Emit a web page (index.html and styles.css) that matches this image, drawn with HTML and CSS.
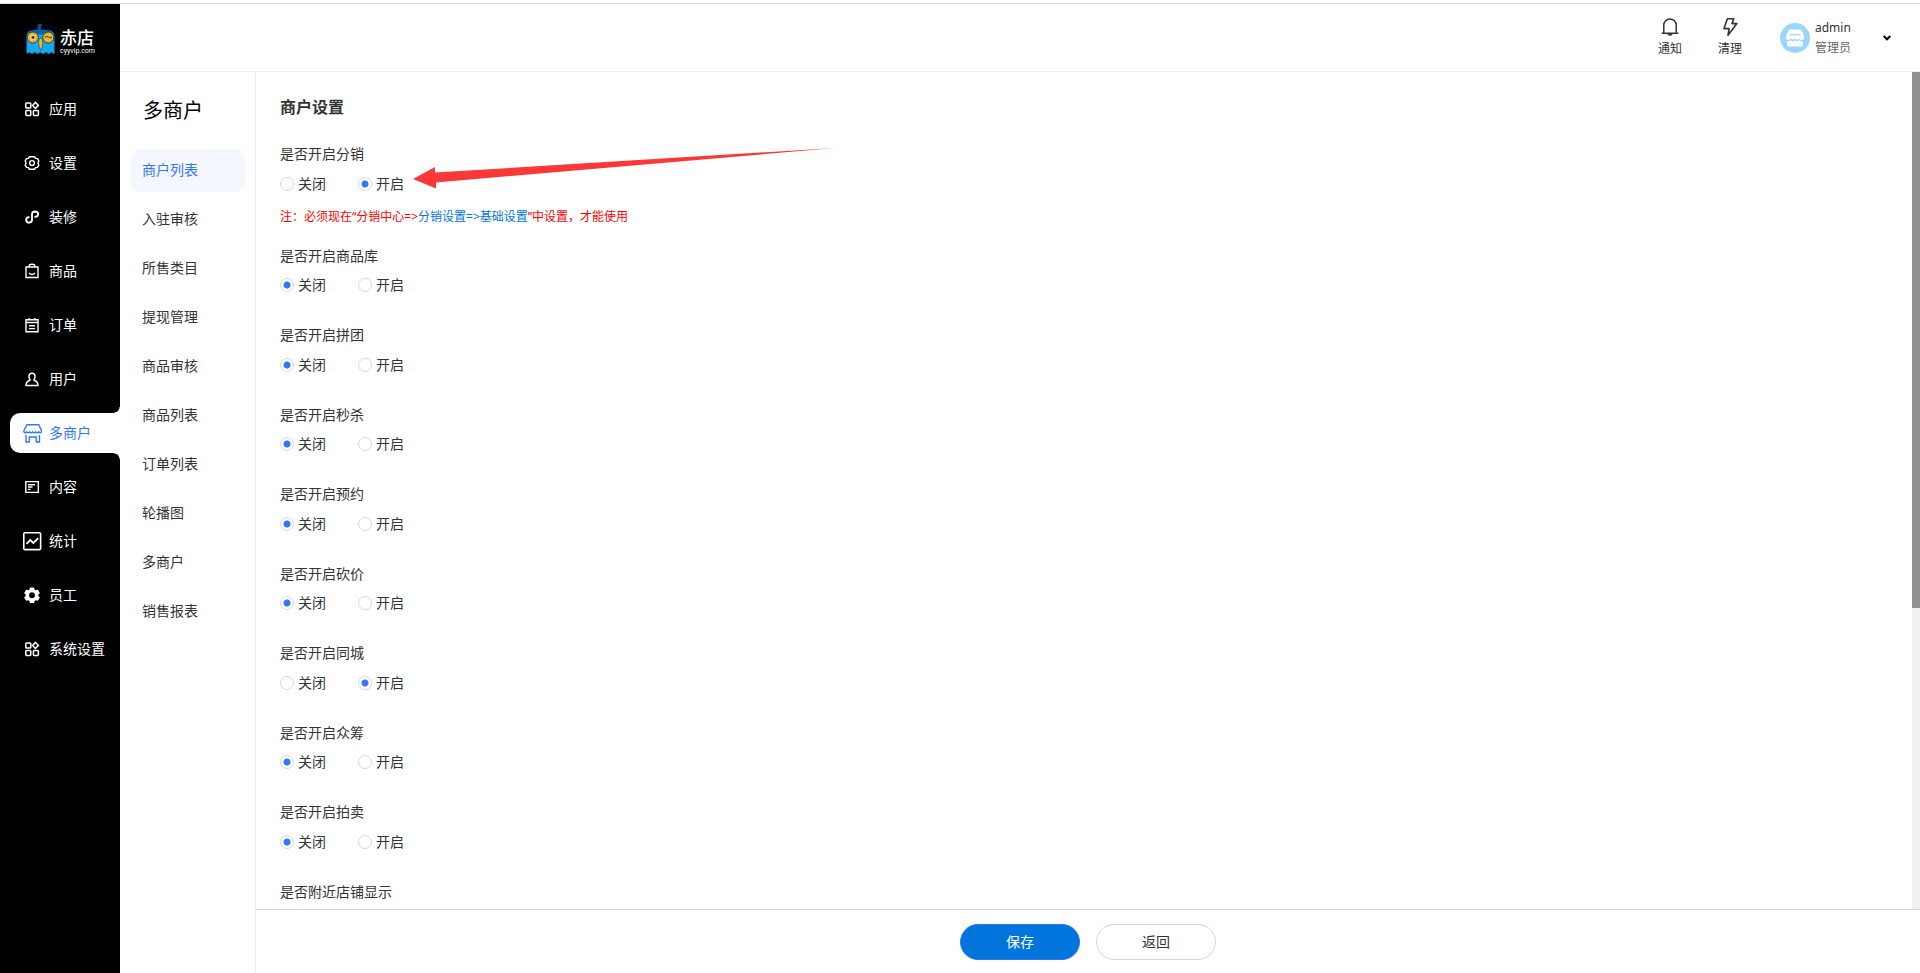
FILE: index.html
```html
<!DOCTYPE html>
<html lang="zh-CN">
<head>
<meta charset="utf-8">
<title>商户设置</title>
<link rel="stylesheet" href="styles.css">
</head>
<body>
<svg class="defs" aria-hidden="true">
  <symbol id="apps" viewBox="0 0 20 20">
    <g fill="none" stroke="currentColor" stroke-width="1.5">
      <rect x="3.8" y="4" width="5" height="5" rx=".8"/>
      <rect x="3.8" y="11.4" width="5" height="5" rx=".8"/>
      <rect x="11.4" y="11.4" width="5" height="5" rx=".8"/>
      <path d="M13.4 3.4 16.4 6.4 13.4 9.4 10.6 6.4Z"/>
    </g>
  </symbol>
</svg>
<div class="app">
  <aside class="sidebar">
    <a class="logo" href="#" aria-label="赤店">
      <svg class="logo-owl" viewBox="0 0 29 32" aria-hidden="true">
        <path d="M12.500 9C10.500 5 11 1 14 .6c2 0 2.500 1 2.300 2-.8-.3-1.500.2-1.300 1.200L16 9z" fill="#0a4a90"/>
        <path d="M.6 31V13Q1 8 6 7.600H23Q28 8 28.400 13V31l-2.800-1.500-2.800 1.500-2.800-1.500-2.800 1.500-2.800-1.500L11.600 31l-2.800-1.500L6 31l-2.700-1.500z" fill="#1ba8e8" stroke="#0a4a90" stroke-width=".8"/>
        <path d="M2 11Q7 5 14.500 7 22 5 27 11L22 9 14.500 12 7 9z" fill="#0d62ac"/>
        <circle cx="6.800" cy="14.500" r="5.500" fill="#fbb813" stroke="#0a4180" stroke-width="1"/>
        <circle cx="22.300" cy="14.500" r="5.500" fill="#fbb813" stroke="#0a4180" stroke-width="1"/>
        <circle cx="7" cy="14.300" r="2.400" fill="#fff3c8"/>
        <circle cx="7" cy="14.300" r="1.600" fill="#123e78"/>
        <path d="M18.800 14.500Q20.300 12.400 22.300 14T26 14" fill="none" stroke="#123e78" stroke-width="1"/>
        <path d="M14.600 14.500Q19 18.500 14.800 27.500 10.400 18.500 14.600 14.500z" fill="#fbb813" stroke="#0a4180" stroke-width=".6"/>
      </svg>
      <span class="logo-text"><b class="logo-name">赤店</b><span class="logo-site">cyyvip.com</span></span>
    </a>
    <nav class="menu">
      <a class="menu-item" href="#"><svg class="menu-icon"><use href="#apps"/></svg>应用</a>
      <a class="menu-item" href="#"><svg class="menu-icon" viewBox="0 0 20 20" fill="none" stroke="currentColor" stroke-width="1.400" stroke-linejoin="round"><path d="M7.500 3.700h5l1 1.700 2 .2 1.300 2.200-.8 2.200.8 2.200-1.300 2.200-2 .2-1 1.700h-5l-1-1.700-2-.2-1.300-2.200.8-2.200-.8-2.200 1.300-2.200 2-.2z"/><circle cx="10" cy="10" r="2.400"/></svg>设置</a>
      <a class="menu-item" href="#"><svg class="menu-icon" viewBox="0 0 20 20" fill="none" stroke="currentColor" stroke-width="1.900" stroke-linecap="round"><path d="M6.800 10.300C4.600 10.300 4 12 4.200 13.300c.3 1.600 1.600 2.400 3 2.300 1.900-.2 2.800-1.600 2.800-3.200V7.600C10 6 11.200 4.600 13 4.500c1.700 0 3 1 3.100 2.500.1 1.600-.9 2.800-2.900 2.700"/></svg>装修</a>
      <a class="menu-item" href="#"><svg class="menu-icon" viewBox="0 0 20 20" fill="none" stroke="currentColor" stroke-width="1.400"><path d="M4 6h12v10.500H4zM7.200 6V5Q7.200 3.300 10 3.300T12.800 5v1M7 12q3 3 6 0"/></svg>商品</a>
      <a class="menu-item" href="#"><svg class="menu-icon" viewBox="0 0 20 20" fill="none" stroke="currentColor" stroke-width="1.400"><path d="M4 4.700h12v12H4zM4 7.500h12M7.200 3v2.500M12.800 3v2.500M7 10.700h6M7 13.600h6"/></svg>订单</a>
      <a class="menu-item" href="#"><svg class="menu-icon" viewBox="0 0 20 20" fill="none" stroke="currentColor" stroke-width="1.500" stroke-linejoin="round"><path d="M8.200 11C6.400 9.200 6.200 4.200 10 4.200s3.600 5 1.800 6.800c2 .8 4.200 1.200 4.200 5.500H4c0-4.300 2.200-4.700 4.200-5.500z"/></svg>用户</a>
      <a class="menu-item active" href="#" aria-current="page"><svg class="menu-icon" viewBox="0 0 20 20" fill="none" stroke="currentColor" stroke-width="1.400"><path d="M5 1.700h11.800l2.700 6v1.100q-1.400 2-3 0-1.500 2-2.900 0-1.500 2-2.900 0-1.500 2-2.900 0-1.500 2-2.900 0-1.700 2-3 0V7.700zM4 12v7h3.300v-5h6.900v5h3.300v-7"/></svg>多商户</a>
      <a class="menu-item" href="#"><svg class="menu-icon" viewBox="0 0 20 20" fill="none" stroke="currentColor" stroke-width="1.400"><path d="M3.800 4.600h12.500v10.800H3.800zM6 7.700h7M6 10h4.500M6 12.400h2.500"/></svg>内容</a>
      <a class="menu-item" href="#"><svg class="menu-icon" viewBox="0 0 20 20" fill="none" stroke="currentColor" stroke-width="1.600"><rect x="1.800" y="1.800" width="16.800" height="16.800" rx="1"/><path d="M4.500 12.800 8.200 9l3.200 3 4.800-4.800" stroke-width="1.900"/></svg>统计</a>
      <a class="menu-item" href="#"><svg class="menu-icon" viewBox="0 0 20 20"><path fill="currentColor" fill-rule="evenodd" d="M8 2.500h4l.5 2 1.400.8 2-.6 2 3.400-1.500 1.500v1.300l1.500 1.500-2 3.400-2-.6-1.400.8-.5 2H8l-.5-2-1.400-.8-2 .6-2-3.400 1.500-1.500V9.600L2.100 8.100l2-3.400 2 .6 1.400-.8zM10 7.300a2.900 2.900 0 1 0 0 5.800 2.900 2.900 0 0 0 0-5.800z"/></svg>员工</a>
      <a class="menu-item" href="#"><svg class="menu-icon"><use href="#apps"/></svg>系统设置</a>
    </nav>
  </aside>
  <div class="main">
    <header class="header">
      <button class="tool" type="button">
        <svg class="tool-icon" viewBox="0 0 20 20" fill="none" stroke="currentColor" stroke-width="1.500" stroke-linejoin="round"><path d="M1.600 16.200h16.800M3.800 16V8.200C3.800 4.500 6.500 1.900 10 1.900s6.200 2.600 6.200 6.300V16M8 16.800q2 2.600 4 0"/></svg>
        通知
      </button>
      <button class="tool" type="button">
        <svg class="tool-icon" viewBox="0 0 20 20" fill="none" stroke="currentColor" stroke-width="1.600" stroke-linejoin="round"><path d="M7.400 1.800h6.400L12 6.600h4.900L8 18.300l1.100-6.700H4z"/></svg>
        清理
      </button>
      <button class="account" type="button">
        <svg class="avatar" viewBox="0 0 30 30" aria-hidden="true"><circle cx="15" cy="15" r="15" fill="#99d6ff"/><path d="M9 6.500h12l3.200 6.500v1.500q0 2.500-2.500 2.500T19 15.500q-2 2.300-4 0-2 2.300-4 0Q10 17 8 17t-2.200-2.500V13z" fill="#fff"/><path d="M7 18.300q2.500 0 4-1 2 1.700 4 0 2 1.700 4 0 1.500 1 4 1V22q0 1.500-1.500 1.500h-13Q7 23.500 7 22z" fill="#fff"/><path d="M9.500 11.800h11" stroke="#99d6ff" stroke-width="1.200"/></svg>
        <span class="account-text"><span class="account-name">admin</span><span class="account-role">管理员</span></span>
        <svg class="chevron" viewBox="0 0 8 6" fill="none" stroke="currentColor" stroke-width="2"><path d="M.7 1 4 4.300 7.300 1"/></svg>
      </button>
    </header>
    <div class="body">
      <nav class="submenu">
        <h2 class="submenu-title">多商户</h2>
        <a class="submenu-item active" href="#" aria-current="page">商户列表</a>
        <a class="submenu-item" href="#">入驻审核</a>
        <a class="submenu-item" href="#">所售类目</a>
        <a class="submenu-item" href="#">提现管理</a>
        <a class="submenu-item" href="#">商品审核</a>
        <a class="submenu-item" href="#">商品列表</a>
        <a class="submenu-item" href="#">订单列表</a>
        <a class="submenu-item" href="#">轮播图</a>
        <a class="submenu-item" href="#">多商户</a>
        <a class="submenu-item" href="#">销售报表</a>
      </nav>
      <form class="panel">
        <div class="viewport">
          <div class="content">
            <h1 class="title">商户设置</h1>
            <fieldset class="field has-note">
              <legend class="label">是否开启分销</legend>
              <div class="options">
                <label class="option"><input class="radio" type="radio" name="fenxiao">关闭</label>
                <label class="option"><input class="radio" type="radio" name="fenxiao" checked>开启</label>
              </div>
              <p class="note">注：必须现在“分销中心=&gt;<a class="note-link" href="#">分销设置=&gt;基础设置</a>”中设置，才能使用</p>
            </fieldset>
            <fieldset class="field">
              <legend class="label">是否开启商品库</legend>
              <div class="options">
                <label class="option"><input class="radio" type="radio" name="shangpinku" checked>关闭</label>
                <label class="option"><input class="radio" type="radio" name="shangpinku">开启</label>
              </div>
            </fieldset>
            <fieldset class="field">
              <legend class="label">是否开启拼团</legend>
              <div class="options">
                <label class="option"><input class="radio" type="radio" name="pintuan" checked>关闭</label>
                <label class="option"><input class="radio" type="radio" name="pintuan">开启</label>
              </div>
            </fieldset>
            <fieldset class="field">
              <legend class="label">是否开启秒杀</legend>
              <div class="options">
                <label class="option"><input class="radio" type="radio" name="miaosha" checked>关闭</label>
                <label class="option"><input class="radio" type="radio" name="miaosha">开启</label>
              </div>
            </fieldset>
            <fieldset class="field">
              <legend class="label">是否开启预约</legend>
              <div class="options">
                <label class="option"><input class="radio" type="radio" name="yuyue" checked>关闭</label>
                <label class="option"><input class="radio" type="radio" name="yuyue">开启</label>
              </div>
            </fieldset>
            <fieldset class="field">
              <legend class="label">是否开启砍价</legend>
              <div class="options">
                <label class="option"><input class="radio" type="radio" name="kanjia" checked>关闭</label>
                <label class="option"><input class="radio" type="radio" name="kanjia">开启</label>
              </div>
            </fieldset>
            <fieldset class="field">
              <legend class="label">是否开启同城</legend>
              <div class="options">
                <label class="option"><input class="radio" type="radio" name="tongcheng">关闭</label>
                <label class="option"><input class="radio" type="radio" name="tongcheng" checked>开启</label>
              </div>
            </fieldset>
            <fieldset class="field">
              <legend class="label">是否开启众筹</legend>
              <div class="options">
                <label class="option"><input class="radio" type="radio" name="zhongchou" checked>关闭</label>
                <label class="option"><input class="radio" type="radio" name="zhongchou">开启</label>
              </div>
            </fieldset>
            <fieldset class="field">
              <legend class="label">是否开启拍卖</legend>
              <div class="options">
                <label class="option"><input class="radio" type="radio" name="paimai" checked>关闭</label>
                <label class="option"><input class="radio" type="radio" name="paimai">开启</label>
              </div>
            </fieldset>
            <fieldset class="field">
              <legend class="label">是否附近店铺显示</legend>
            </fieldset>
            <svg class="arrow" viewBox="0 0 424 44" aria-hidden="true"><path d="M1 33 23 21v5.500L423 2 24 36.500v6z" fill="#fb3838"/></svg>
          </div>
          <div class="track"><div class="thumb"></div></div>
        </div>
        <div class="footer">
          <button class="btn btn-primary" type="submit">保存</button>
          <button class="btn" type="button">返回</button>
        </div>
      </form>
    </div>
  </div>
</div>
</body>
</html>
```
FILE: styles.css
```css
* {
  box-sizing: border-box;
}

body {
  margin: 0;
  font: 14px/1.25 "Noto Sans", "Noto Sans CJK SC", sans-serif;
  color: #333;
  background: #fff;
}

a {
  color: inherit;
  text-decoration: none;
}

button {
  font: inherit;
  color: inherit;
  cursor: pointer;
}

.defs {
  display: none;
}

.app {
  display: flex;
  height: 100vh;
  padding-top: 3px;
  overflow: hidden;
}

/* Primary navigation */
.sidebar {
  flex: 0 0 120px;
  padding-top: 1px;
  background: #000 linear-gradient(#ddd, #ddd) top / 100% 1px no-repeat;
  color: #fff;
}

.logo {
  display: flex;
  align-items: center;
  gap: 5px;
  height: 70px;
  padding-left: 26px;
}

.logo-owl {
  width: 29px;
  height: 32px;
}

.logo-text {
  display: flex;
  flex-direction: column;
  padding-top: 8px;
}

.logo-name {
  font: 500 17px/16px "Liberation Sans", "Noto Sans CJK SC", sans-serif;
}

.logo-site {
  font: 7px/8px Roboto, sans-serif;
}

.menu {
  display: flex;
  flex-direction: column;
  gap: 14px;
  padding: 15px 0 0 10px;
}

.menu-item {
  position: relative;
  display: flex;
  align-items: center;
  gap: 7px;
  height: 40px;
  padding-left: 12px;
  border-radius: 10px 0 0 10px;
  white-space: nowrap;
}

.menu-icon {
  width: 20px;
  height: 20px;
}

.menu-item.active {
  background: #fff;
  color: #3478f6;
}

.menu-item.active::before,
.menu-item.active::after {
  content: "";
  position: absolute;
  right: 0;
  width: 6px;
  height: 6px;
}

.menu-item.active::before {
  bottom: 100%;
  background: radial-gradient(circle at 0 0, #000 5px, #fff 6px);
}

.menu-item.active::after {
  top: 100%;
  background: radial-gradient(circle at 0 100%, #000 5px, #fff 6px);
}

.main {
  flex: 1;
  display: flex;
  flex-direction: column;
  min-width: 0;
}

/* Top bar */
.header {
  display: flex;
  justify-content: flex-end;
  height: 69px;
  padding-right: 29px;
  border-top: 1px solid #ddd;
  border-bottom: 1px solid #eee;
}

.tool {
  display: flex;
  flex-direction: column;
  align-items: center;
  gap: 4px;
  width: 60px;
  padding: 13px 0 0;
  border: 0;
  background: none;
  font-size: 12px;
}

.tool-icon {
  width: 20px;
  height: 20px;
}

.account {
  display: flex;
  align-items: center;
  padding: 0 0 0 20px;
  border: 0;
  background: none;
  text-align: left;
}

.avatar {
  width: 30px;
  height: 30px;
  margin-right: 5px;
}

.account-text {
  display: flex;
  flex-direction: column;
  gap: 2px;
  margin-right: 32px;
  font-size: 12px;
  line-height: 18px;
}

.account-role {
  color: #666;
}

.chevron {
  width: 8px;
  height: 6px;
  color: #000;
}

.body {
  flex: 1;
  display: flex;
  min-height: 0;
}

/* Secondary navigation */
.submenu {
  flex: 0 0 136px;
  display: flex;
  flex-direction: column;
  gap: 6px;
  padding: 26px 10px 0 11px;
  border-right: 1px solid #eee;
}

.submenu-title {
  margin: 0 0 19px;
  padding-left: 12px;
  font-size: 20px;
  line-height: 26px;
  font-weight: 400;
  color: #000;
}

.submenu-item {
  height: 43px;
  padding-left: 11px;
  border-radius: 10px;
  line-height: 41px;
}

.submenu-item.active {
  background: #f4f7ff;
  color: #3478f6;
}

/* Settings form */
.panel {
  flex: 1;
  display: flex;
  flex-direction: column;
  min-width: 0;
}

.viewport {
  flex: 1;
  display: flex;
  min-height: 0;
}

.content {
  position: relative;
  flex: 1;
  padding: 24px;
  overflow-y: auto;
  scrollbar-width: none;
}

.track {
  flex: 0 0 8px;
  background: #f1f1f1;
}

.thumb {
  height: 64%;
  background: #919191;
}

.title {
  margin: 0 0 27px;
  font-size: 16px;
  line-height: 22px;
  font-weight: 600;
}

.field {
  margin: 0 0 31px;
  padding: 0;
  border: 0;
}

.has-note {
  margin-bottom: 23px;
}

.label {
  padding: 0;
}

.options {
  display: flex;
  gap: 32px;
  margin-top: 11px;
}

.option {
  display: flex;
  align-items: center;
  gap: 4px;
  height: 20px;
}

.radio {
  appearance: none;
  width: 14px;
  height: 14px;
  margin: 0;
  border: 1px solid #d9d9d9;
  border-radius: 50%;
  background: #fff;
}

.radio:checked {
  background: radial-gradient(circle, #3478f6 3px, #fff 4px);
}

.note {
  margin: 15px 0 0;
  font-size: 12px;
  color: #f00;
}

.note-link {
  color: #0076dd;
}

/* Pointer drawn over the form */
.arrow {
  position: absolute;
  left: 156px;
  top: 74px;
  width: 424px;
  height: 44px;
  pointer-events: none;
}

.footer {
  display: flex;
  justify-content: center;
  gap: 16px;
  padding: 14px 0 13px;
  border-top: 1px solid #d4d6da;
}

.btn {
  width: 120px;
  height: 36px;
  padding: 0;
  border: 1px solid #d4d4dc;
  border-radius: 18px;
  background: #fff;
}

.btn-primary {
  border-color: #2a76ee;
  background: #0076dd;
  color: #fff;
}
```
